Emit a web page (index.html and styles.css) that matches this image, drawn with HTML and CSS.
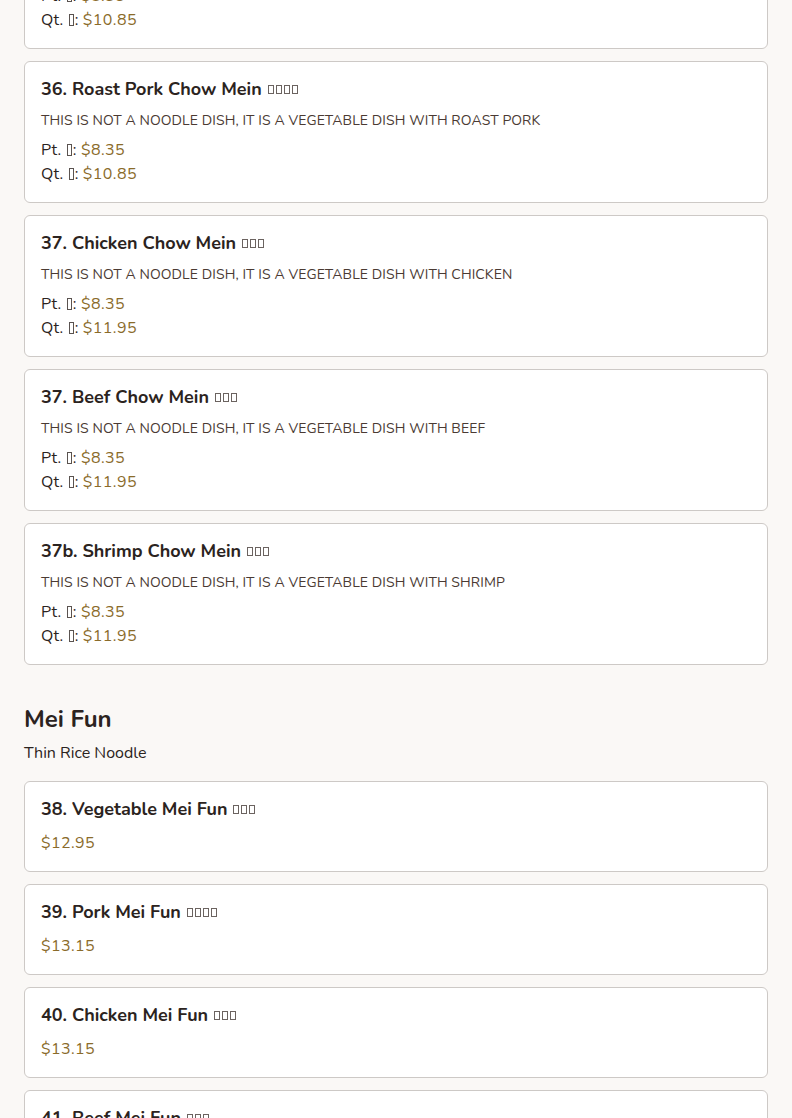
FILE: index.html
```html
<!DOCTYPE html>
<html lang="en">
<head>
<meta charset="utf-8">
<title>Menu</title>
<link rel="stylesheet" href="styles.css">
</head>
<body>
<main class="menu">
  <section class="section section-first">
    <div class="items">
      <article class="card">
        <h3 class="title">35. Pork Chow Mein <span class="cn"><i class="tofu"></i><i class="tofu"></i><i class="tofu"></i></span></h3>
        <p class="desc">THIS IS NOT A NOODLE DISH, IT IS A VEGETABLE DISH WITH PORK</p>
        <div class="prices">
          <div class="price-row">Pt. <i class="tofu tofu-sm"></i>: <span class="price">$8.35</span></div>
          <div class="price-row">Qt. <i class="tofu tofu-sm"></i>: <span class="price">$10.85</span></div>
        </div>
      </article>
      <article class="card">
        <h3 class="title">36. Roast Pork Chow Mein <span class="cn"><i class="tofu"></i><i class="tofu"></i><i class="tofu"></i><i class="tofu"></i></span></h3>
        <p class="desc">THIS IS NOT A NOODLE DISH, IT IS A VEGETABLE DISH WITH ROAST PORK</p>
        <div class="prices">
          <div class="price-row">Pt. <i class="tofu tofu-sm"></i>: <span class="price">$8.35</span></div>
          <div class="price-row">Qt. <i class="tofu tofu-sm"></i>: <span class="price">$10.85</span></div>
        </div>
      </article>
      <article class="card">
        <h3 class="title">37. Chicken Chow Mein <span class="cn"><i class="tofu"></i><i class="tofu"></i><i class="tofu"></i></span></h3>
        <p class="desc">THIS IS NOT A NOODLE DISH, IT IS A VEGETABLE DISH WITH CHICKEN</p>
        <div class="prices">
          <div class="price-row">Pt. <i class="tofu tofu-sm"></i>: <span class="price">$8.35</span></div>
          <div class="price-row">Qt. <i class="tofu tofu-sm"></i>: <span class="price">$11.95</span></div>
        </div>
      </article>
      <article class="card">
        <h3 class="title">37. Beef Chow Mein <span class="cn"><i class="tofu"></i><i class="tofu"></i><i class="tofu"></i></span></h3>
        <p class="desc">THIS IS NOT A NOODLE DISH, IT IS A VEGETABLE DISH WITH BEEF</p>
        <div class="prices">
          <div class="price-row">Pt. <i class="tofu tofu-sm"></i>: <span class="price">$8.35</span></div>
          <div class="price-row">Qt. <i class="tofu tofu-sm"></i>: <span class="price">$11.95</span></div>
        </div>
      </article>
      <article class="card">
        <h3 class="title">37b. Shrimp Chow Mein <span class="cn"><i class="tofu"></i><i class="tofu"></i><i class="tofu"></i></span></h3>
        <p class="desc">THIS IS NOT A NOODLE DISH, IT IS A VEGETABLE DISH WITH SHRIMP</p>
        <div class="prices">
          <div class="price-row">Pt. <i class="tofu tofu-sm"></i>: <span class="price">$8.35</span></div>
          <div class="price-row">Qt. <i class="tofu tofu-sm"></i>: <span class="price">$11.95</span></div>
        </div>
      </article>
    </div>
  </section>

  <section class="section">
    <h2 class="section-title">Mei Fun</h2>
    <p class="section-sub">Thin Rice Noodle</p>
    <div class="items">
      <article class="card">
        <h3 class="title">38. Vegetable Mei Fun <span class="cn"><i class="tofu"></i><i class="tofu"></i><i class="tofu"></i></span></h3>
        <div class="prices single"><span class="price">$12.95</span></div>
      </article>
      <article class="card">
        <h3 class="title">39. Pork Mei Fun <span class="cn"><i class="tofu"></i><i class="tofu"></i><i class="tofu"></i><i class="tofu"></i></span></h3>
        <div class="prices single"><span class="price">$13.15</span></div>
      </article>
      <article class="card">
        <h3 class="title">40. Chicken Mei Fun <span class="cn"><i class="tofu"></i><i class="tofu"></i><i class="tofu"></i></span></h3>
        <div class="prices single"><span class="price">$13.15</span></div>
      </article>
      <article class="card">
        <h3 class="title">41. Beef Mei Fun <span class="cn"><i class="tofu"></i><i class="tofu"></i><i class="tofu"></i></span></h3>
        <div class="prices single"><span class="price">$13.15</span></div>
      </article>
    </div>
  </section>
</main>
</body>
</html>
```
FILE: styles.css
```css
* { box-sizing: border-box; }
html, body { margin: 0; padding: 0; }
body {
  background: #faf8f6;
  font-family: "Nunito", "Lato", "Noto Sans", sans-serif;
  color: #2b2320;
  overflow: hidden;
}
.menu {
  padding: 0 24px;
  margin-top: -93px;
}
.section { margin-bottom: 38px; }
.items {
  display: flex;
  flex-direction: column;
  gap: 12px;
}
.card {
  background: #ffffff;
  border: 1px solid #cdc9c6;
  border-radius: 6px;
  padding: 16px;
}
.title {
  margin: 0;
  font-size: 18px;
  line-height: 22px;
  font-weight: 700;
  color: #2b2320;
}
.cn {
  display: inline-flex;
  gap: 2px;
  margin-left: 1px;
  vertical-align: 1px;
}
.tofu {
  display: inline-block;
  width: 6px;
  height: 9px;
  border: 1px solid #6b6360;
}
.tofu-sm {
  width: 5px;
  height: 12px;
  margin: 0 1px;
  vertical-align: -1px;
  border-color: #5a5350;
}
.desc {
  margin: 11px 0 0;
  font-size: 14px;
  line-height: 20px;
  letter-spacing: 0.1px;
  color: #4a3a33;
}
.prices { margin-top: 7px; }
.prices.single { margin-top: 11px; }
.price-row, .prices.single {
  font-size: 16px;
  line-height: 24px;
  color: #2b2320;
}
.price-row { letter-spacing: 0.2px; }
.price { color: #8a6b2a; letter-spacing: 0.4px; }
.section-title {
  margin: 0;
  font-size: 24px;
  line-height: 32px;
  font-weight: 700;
  color: #2b2320;
}
.section-sub {
  margin: 6px 0 16px;
  font-size: 16px;
  line-height: 24px;
  color: #2b2320;
}
```
